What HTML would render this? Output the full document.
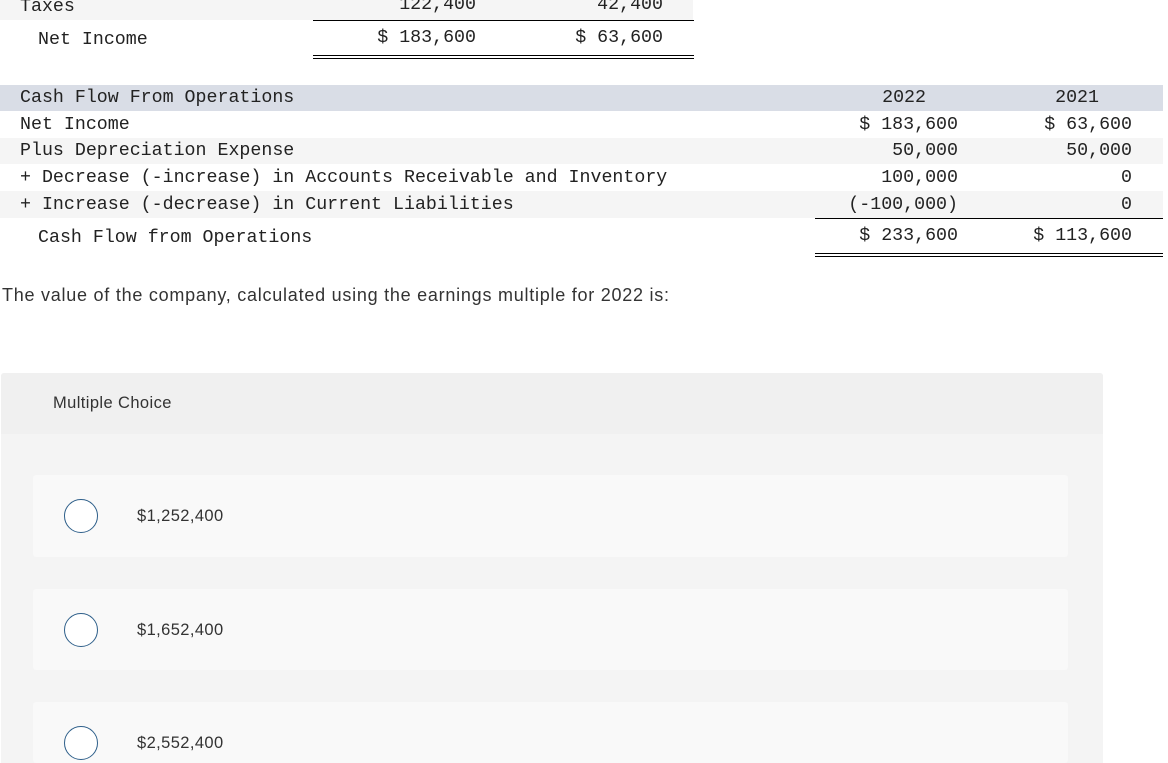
<!DOCTYPE html>
<html style="margin:0;height:763px;overflow:hidden"><head><style>
body{margin:0;width:1168px;height:763px;background:#fff;position:relative;overflow:hidden;font-family:"Liberation Mono",monospace;color:#222}
.a{position:absolute}
.m{font-size:18.3px;line-height:20px;white-space:pre}
.r{text-align:right}
.s{font-family:"Liberation Sans",sans-serif;color:#333;white-space:nowrap}
.bg{position:absolute;background:#f5f5f5}
.ln{position:absolute;height:2px;background:#000}
.card{position:absolute;left:33px;width:1035px;background:#f9f9f9;border-radius:3px}
.c{position:absolute;left:64px;width:32px;height:32px;border:1.5px solid #2e5f8a;border-radius:50%;background:#fff}
</style></head><body>
<div class="bg" style="left:0;top:0;width:693px;height:20px"></div>
<div class="a m" style="left:20px;top:-3px">Taxes</div>
<div class="a m r" style="left:300px;width:176px;top:-5px">122,400</div>
<div class="a m r" style="left:500px;width:163px;top:-5px">42,400</div>
<div class="ln" style="left:313px;top:20px;width:381px;height:1px"></div>
<div class="a m" style="left:38px;top:30px">Net Income</div>
<div class="a m r" style="left:300px;width:176px;top:28px">$ 183,600</div>
<div class="a m r" style="left:500px;width:163px;top:28px">$ 63,600</div>
<div class="ln" style="left:313px;top:55px;width:381px;height:1px"></div>
<div class="ln" style="left:313px;top:58px;width:381px;height:1px"></div>

<div class="bg" style="left:0;top:85px;width:1163px;height:26px;background:#d9dde6"></div>
<div class="bg" style="left:0;top:138px;width:1163px;height:26px"></div>
<div class="bg" style="left:0;top:191px;width:1163px;height:27px"></div>
<div class="a m" style="left:20px;top:88px">Cash Flow From Operations</div>
<div class="a m" style="left:20px;top:115px">Net Income</div>
<div class="a m" style="left:20px;top:141px">Plus Depreciation Expense</div>
<div class="a m" style="left:20px;top:168px">+ Decrease (-increase) in Accounts Receivable and Inventory</div>
<div class="a m" style="left:20px;top:195px">+ Increase (-decrease) in Current Liabilities</div>
<div class="a m" style="left:38px;top:228px">Cash Flow from Operations</div>

<div class="a m r" style="left:780px;width:146px;top:88px">2022</div>
<div class="a m r" style="left:960px;width:139px;top:88px">2021</div>
<div class="a m r" style="left:780px;width:178px;top:115px">$ 183,600</div>
<div class="a m r" style="left:960px;width:172px;top:115px">$ 63,600</div>
<div class="a m r" style="left:780px;width:178px;top:141px">50,000</div>
<div class="a m r" style="left:960px;width:172px;top:141px">50,000</div>
<div class="a m r" style="left:780px;width:178px;top:168px">100,000</div>
<div class="a m r" style="left:960px;width:172px;top:168px">0</div>
<div class="a m r" style="left:780px;width:178px;top:195px">(-100,000)</div>
<div class="a m r" style="left:960px;width:172px;top:195px">0</div>
<div class="ln" style="left:815px;top:218px;width:348px;height:1px"></div>
<div class="a m r" style="left:780px;width:178px;top:226px">$ 233,600</div>
<div class="a m r" style="left:960px;width:172px;top:226px">$ 113,600</div>
<div class="ln" style="left:815px;top:253px;width:348px;height:1px"></div>
<div class="ln" style="left:815px;top:256px;width:348px;height:1px"></div>

<div class="a s" style="left:2px;top:285px;font-size:18px;letter-spacing:0.75px">The value of the company, calculated using the earnings multiple for 2022 is:</div>

<div class="a" style="left:1px;top:373px;width:1102px;height:390px;background:#f4f4f4;border-radius:3px 3px 0 0"></div>
<div class="a" style="left:1px;top:373px;width:1102px;height:61px;background:#f0f0f0;border-radius:3px 3px 0 0"></div>
<div class="a s" style="left:53px;top:394px;font-size:16.5px;letter-spacing:0.4px">Multiple Choice</div>

<div class="card" style="top:475px;height:82px"></div>
<div class="c" style="top:499px"></div>
<div class="a s" style="left:137px;top:507px;font-size:16.5px;letter-spacing:0.4px">$1,252,400</div>
<div class="card" style="top:589px;height:81px"></div>
<div class="c" style="top:613px"></div>
<div class="a s" style="left:137px;top:621px;font-size:16.5px;letter-spacing:0.4px">$1,652,400</div>
<div class="card" style="top:702px;height:61px"></div>
<div class="c" style="top:726px"></div>
<div class="a s" style="left:137px;top:734px;font-size:16.5px;letter-spacing:0.4px">$2,552,400</div>
</body></html>
